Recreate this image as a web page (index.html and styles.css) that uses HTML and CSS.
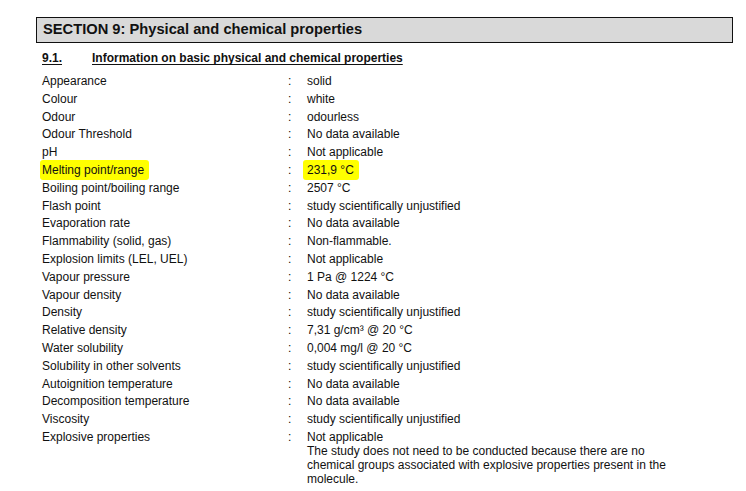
FILE: index.html
```html
<!DOCTYPE html>
<html>
<head>
<meta charset="utf-8">
<link rel="stylesheet" href="styles.css">
</head>
<body>
<div class="page">
  <div class="section-head">SECTION 9: Physical and chemical properties</div>
  <div class="sub"><span class="num">9.1.</span><span class="subtitle">Information on basic physical and chemical properties</span></div>
  <div class="props">
    <div class="lbl">Appearance</div><div class="col">:</div><div class="val">solid</div>
    <div class="lbl">Colour</div><div class="col">:</div><div class="val">white</div>
    <div class="lbl">Odour</div><div class="col">:</div><div class="val">odourless</div>
    <div class="lbl">Odour Threshold</div><div class="col">:</div><div class="val">No data available</div>
    <div class="lbl">pH</div><div class="col">:</div><div class="val">Not applicable</div>
    <div class="lbl"><span class="hl">Melting point/range</span></div><div class="col">:</div><div class="val"><span class="hl hl2">231,9 °C</span></div>
    <div class="lbl">Boiling point/boiling range</div><div class="col">:</div><div class="val">2507 °C</div>
    <div class="lbl">Flash point</div><div class="col">:</div><div class="val">study scientifically unjustified</div>
    <div class="lbl">Evaporation rate</div><div class="col">:</div><div class="val">No data available</div>
    <div class="lbl">Flammability (solid, gas)</div><div class="col">:</div><div class="val">Non-flammable.</div>
    <div class="lbl">Explosion limits (LEL, UEL)</div><div class="col">:</div><div class="val">Not applicable</div>
    <div class="lbl">Vapour pressure</div><div class="col">:</div><div class="val">1 Pa @ 1224 °C</div>
    <div class="lbl">Vapour density</div><div class="col">:</div><div class="val">No data available</div>
    <div class="lbl">Density</div><div class="col">:</div><div class="val">study scientifically unjustified</div>
    <div class="lbl">Relative density</div><div class="col">:</div><div class="val">7,31 g/cm³ @ 20 °C</div>
    <div class="lbl">Water solubility</div><div class="col">:</div><div class="val">0,004 mg/l @ 20 °C</div>
    <div class="lbl">Solubility in other solvents</div><div class="col">:</div><div class="val">study scientifically unjustified</div>
    <div class="lbl">Autoignition temperature</div><div class="col">:</div><div class="val">No data available</div>
    <div class="lbl">Decomposition temperature</div><div class="col">:</div><div class="val">No data available</div>
    <div class="lbl">Viscosity</div><div class="col">:</div><div class="val">study scientifically unjustified</div>
    <div class="lbl">Explosive properties</div><div class="col">:</div><div class="val">Not applicable<br>The study does not need to be conducted because there are no chemical groups associated with explosive properties present in the molecule.</div>
    <div class="lbl">Oxidising properties</div><div class="col">:</div><div class="val">Not applicable</div>
  </div>
</div>
</body>
</html>
```

FILE: styles.css
```css
html, body {
  margin: 0;
  padding: 0;
  background: #ffffff;
}
body {
  font-family: "Liberation Sans", Arial, sans-serif;
  color: #111111;
  overflow: hidden;
}
.page {
  padding: 17px 13px 0 36px;
  width: 697px;
}
.section-head {
  box-sizing: border-box;
  height: 26px;
  background: #d9d9d9;
  border: 1.5px solid #111;
  font-weight: bold;
  font-size: 14.7px;
  line-height: 23px;
  padding-left: 6px;
}
.sub {
  margin-top: 6px;
  height: 18px;
  font-weight: bold;
  font-size: 12px;
  line-height: 18px;
  padding-left: 6px;
  display: flex;
}
.num, .subtitle {
  text-decoration: underline;
  text-underline-offset: 2px;
}
.num {
  width: 50px;
  display: inline-block;
}
.props {
  display: grid;
  grid-template-columns: 246px 19px 362px;
  row-gap: 3.8px;
  font-size: 12px;
  line-height: 14px;
  padding-left: 6px;
  margin-top: 7px;
}
.hl {
  background: #ffff00;
  padding: 3px 5px 3px 2px;
  margin-left: -2px;
  border-radius: 3px;
}
.hl2 {
  padding-left: 4px;
  margin-left: -4px;
}
```
